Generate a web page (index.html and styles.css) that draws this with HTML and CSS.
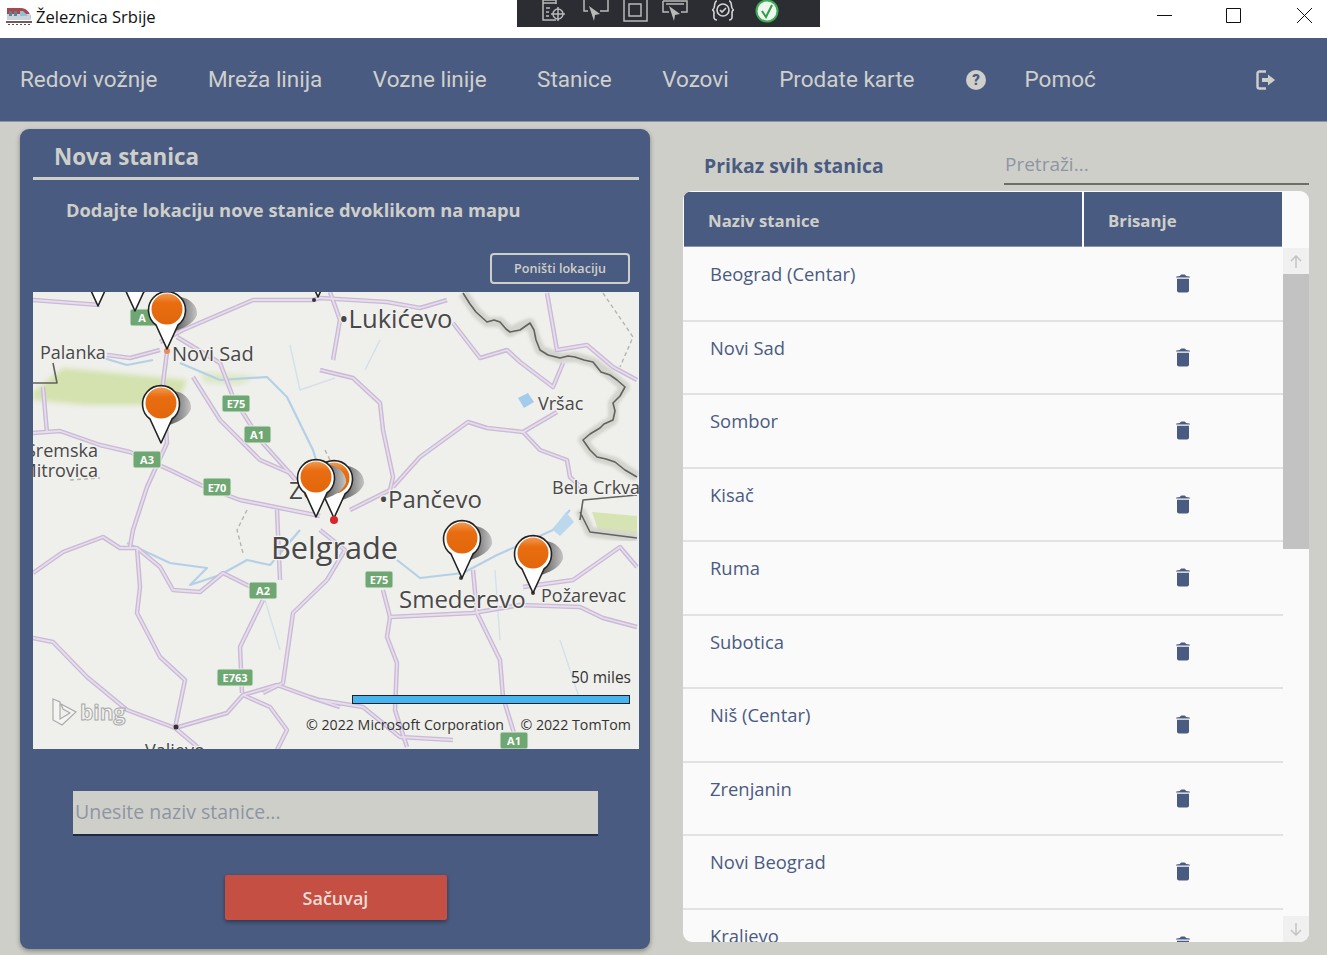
FILE: index.html
```html
<!DOCTYPE html>
<html>
<head>
    <meta charset="utf-8">
    <title>Železnica Srbije</title>
    <link rel="stylesheet" href="styles.css">
</head>
<body>
<!-- naslovna traka -->
<div class="titlebar">
    <div class="app-title">
        <svg class="train" width="26" height="20" viewBox="0 0 26 20">
            <path d="M1 2h14c5 0 9 4 10 10v2H1z" fill="#a8474c"/>
            <path d="M1 8h23l1 4v2H1z" fill="#c9d3dc"/>
            <path d="M3 5h3v5H3zM8 5h3v5H8z" fill="#5f7f96"/>
            <path d="M14 5h3l5 5h-8z" fill="#8fc0d6"/>
            <path d="M0 15h26v2H0z" fill="#6f5b60"/>
            <path d="M2 18h2v1H2zM6 18h2v1H6zM10 18h2v1h-2zM14 18h2v1h-2zM18 18h2v1h-2zM22 18h2v1h-2z" fill="#555"/>
        </svg>
        <span>Železnica Srbije</span>
    </div>
    <div class="debugbar">
        <svg width="28" height="24" viewBox="0 0 28 24" fill="none" stroke="#b9b9b9" stroke-width="1.5">
            <path d="M15 20H2V0h13v4"/><path d="M2 3h13M5 8h4M5 12h3M5 16h3"/>
            <circle cx="17" cy="14" r="5"/><path d="M17 7v14M10 14h14"/>
        </svg>
        <svg width="26" height="24" viewBox="0 0 26 24" fill="none" stroke="#b9b9b9" stroke-width="1.5">
            <path d="M1 0v11h4M25 0v11h-8"/>
            <path d="M6 6l11 8-5 1-1 6z" fill="#b9b9b9" stroke="none"/>
        </svg>
        <svg width="25" height="24" viewBox="0 0 25 24" fill="none" stroke="#b9b9b9" stroke-width="1.5">
            <path d="M1 0v21h23V0M6 4h12v12H6z"/>
        </svg>
        <svg width="26" height="24" viewBox="0 0 26 24" fill="none" stroke="#b9b9b9" stroke-width="1.5">
            <path d="M1 1h24v11h-6M1 1v11h6M4 4h18"/>
            <path d="M7 6l11 8-5 1-1 6z" fill="#b9b9b9" stroke="none"/>
        </svg>
        <svg width="24" height="24" viewBox="0 0 24 24" fill="none" stroke="#d4d4d4" stroke-width="1.6">
            <path d="M6 1C3 1 4 6 3 8S1 10 1 10s2 0 2 3-1 7 3 7M18 1c3 0 2 5 3 7s2 2 2 2-2 0-2 3 1 7-3 7"/>
            <circle cx="12" cy="10" r="6"/><path d="M9 10l2 2 4-4"/>
        </svg>
        <svg width="24" height="24" viewBox="0 0 24 24">
            <circle cx="12" cy="11" r="11.5" fill="#3dac55"/>
            <circle cx="12" cy="11" r="9.5" fill="#eef6ee"/>
            <path d="M7 11l4 6 6-12" fill="none" stroke="#2f9e46" stroke-width="2"/>
        </svg>
    </div>
    <div class="window-btns">
        <svg width="15" height="15" viewBox="0 0 15 15"><path d="M0 7.5h15" stroke="#111"/></svg>
        <svg class="win-max" width="15" height="15" viewBox="0 0 15 15"><path d="M.5.5h14v14H.5z" fill="none" stroke="#111"/></svg>
        <svg width="15" height="15" viewBox="0 0 15 15"><path d="M0 0l15 15M15 0L0 15" stroke="#111"/></svg>
    </div>
</div>

<!-- glavni meni -->
<nav class="nav">
    <a>Redovi vožnje</a>
    <a>Mreža linija</a>
    <a>Vozne linije</a>
    <a>Stanice</a>
    <a>Vozovi</a>
    <a>Prodate karte</a>
    <span class="help-icon">?</span>
    <a class="help-link">Pomoć</a>
    <svg class="logout" width="19" height="20" viewBox="0 0 19 20">
        <path d="M10 1.5H3.5a2 2 0 0 0-2 2v13a2 2 0 0 0 2 2H10" fill="none" stroke="#d0d0cb" stroke-width="2.4"/>
        <path d="M6 8h6V4.5l7 5.5-7 5.500V12H6z" fill="#d0d0cb"/>
    </svg>
</nav>

<div class="main">
    <!-- nova stanica -->
    <section class="panel">
        <h2 class="panel-title">Nova stanica</h2>
        <p class="panel-hint">Dodajte lokaciju nove stanice dvoklikom na mapu</p>
        <div class="reset-row"><button class="btn-outline">Poništi lokaciju</button></div>

        <svg class="map" width="606" height="457" viewBox="33 292 606 457">
            <defs>
                <linearGradient id="pinShadow" x1="0" y1="0" x2="1" y2="0">
                    <stop offset="0" stop-color="#333"/>
                    <stop offset="1" stop-color="#c4c4c4"/>
                </linearGradient>
                <linearGradient id="pinFill" x1="0" y1="0" x2="0" y2="1">
                    <stop offset="0" stop-color="#f09a52"/>
                    <stop offset=".3" stop-color="#e96d10"/>
                    <stop offset="1" stop-color="#e2670c"/>
                </linearGradient>
                <filter id="soft"><feGaussianBlur stdDeviation="2.5"/></filter>
                <filter id="halo"><feGaussianBlur stdDeviation="1.6"/></filter>
                <filter id="fine"><feGaussianBlur stdDeviation=".4"/></filter>
                <g id="pin">
                    <path d="M0 0L8-18C14-20 26-24 30-34 31-44 22-51 13-52L0-30z" fill="url(#pinShadow)"/>
                    <path d="M0 0L-11-24A18.5 18.5 0 1 1 11-24z" fill="#fff" stroke="#222" stroke-width="1.6" stroke-linejoin="round"/>
                    <circle cy="-40" r="15.5" fill="url(#pinFill)"/>
                </g>
                <g id="roads">
                    <path d="M160 342L183 330 253 300 313 300 320 298 387 302 420 308 447 300"/>
                    <path d="M177 337L220 363 233 397 260 440 287 470 312 500"/>
                    <path d="M193 377L220 420 260 460 290 473 312 500"/>
                    <path d="M167 352L163 383 167 443 147 487 133 530 130 547"/>
                    <path d="M33 433L60 431 100 445 130 452 170 470 205 487 240 500 290 510 320 516"/>
                    <path d="M47 433L43 387M107 355L130 358 160 350"/>
                    <path d="M320 370L353 378 380 403 383 430 393 477 390 490 350 510"/>
                    <path d="M393 487L420 457 468 422 487 428 523 432 557 412"/>
                    <path d="M523 432L540 450 567 460 570 477 587 493"/>
                    <path d="M453 323L480 358 507 350 520 362 553 387 563 363"/>
                    <path d="M547 293L557 350 587 345 613 367 637 380"/>
                    <path d="M33 300L100 305M330 292L340 320 333 360"/>
                    <path d="M33 573L63 552 103 537 120 548 137 548 160 567 173 590 200 592 223 573 247 585 263 592"/>
                    <path d="M137 548L140 587 137 613 160 657 185 680 175 728"/>
                    <path d="M33 638L53 642 87 677 127 710 175 728 227 713 243 695 277 685 310 697 340 707"/>
                    <path d="M263 600L240 647 242 693"/>
                    <path d="M243 695L270 707 287 730 277 750"/>
                    <path d="M327 580L293 613 283 683 263 693"/>
                    <path d="M277 510L280 580M320 530L345 550 327 580"/>
                    <path d="M383 590L390 617 473 613 520 605 580 607 603 618 637 627"/>
                    <path d="M473 570L477 613 500 660 503 697 517 743"/>
                    <path d="M390 617L387 637 397 663 395 710 407 747"/>
                    <path d="M523 587L573 580 620 547 637 567"/>
                    <path d="M320 700L363 707 400 737 453 740"/>
                    <path d="M175 728L200 749"/>
                </g>
            </defs>

            <rect x="33" y="292" width="606" height="457" fill="#efefec"/>

            <!-- zelene povrsine -->
            <path d="M33 392L63 368 187 380 176 405 87 405 33 400z" fill="#d3e2ae" filter="url(#soft)"/>
            <path d="M200 372L255 376 240 385 205 383z" fill="#dde8c5" filter="url(#soft)"/>
            <path d="M592 512L637 516V534L598 530z" fill="#d6e4b4"/>

            <!-- reke -->
            <g class="river">
                <path d="M100 357L127 365 153 360M180 363L220 380 267 377 287 397 313 450 325 490"/>
                <path d="M397 560L420 578 463 573 497 555 553 530 570 510"/>
                <path d="M127 543L170 563 207 568 190 585 220 575 247 560 270 565 300 530"/>
            </g>
            <g class="stream">
                <path d="M265 600L280 650M495 570L500 640M560 640L580 700M290 345L300 390 335 378M380 340L365 370"/>
            </g>
            <path d="M518 398L528 393 534 402 524 408z" fill="#a5cbec"/>
            <path d="M553 530L566 512 574 522 560 536z" fill="#bcd8ec"/>

            <!-- granice -->
            <path class="border-halo" filter="url(#halo)" d="M463 293L476 312 487 322 500 322 510 332 520 327 530 323 536 340 540 350 560 358 575 357 593 362 610 375 625 387 613 403 613 420 600 428 583 440 590 450 597 457 615 462 637 477"/>
            <path class="border-halo" filter="url(#halo)" d="M580 510L590 532 637 538"/>
            <path class="border-line" d="M463 293L470 304 476 312 487 322 494 320 500 322 506 329 510 332 520 330 530 323 534 330 536 340 540 350 548 355 560 358 568 356 575 357 584 360 593 362 601 372 610 375 617 380 625 387 620 396 613 403 615 411 613 420 604 424 600 428 590 434 583 440 590 450 597 457 606 459 615 462 625 470 637 477"/>
            <path class="border-line" d="M580 512L590 532 637 538M580 520L583 500 637 495M33 383L57 383 53 363"/>
            <path class="border-dash" d="M603 293L633 337 620 367M247 510L237 530 243 553M325 450L340 480M70 480L100 478"/>

            <g filter="url(#fine)">
                <use href="#roads" class="road-casing"/>
                <use href="#roads" class="road-core"/>
            </g>

            <!-- oznake puteva -->
            <g class="shield">
                <rect x="222" y="395" width="28" height="17" rx="2"/><text x="236" y="408">E75</text>
                <rect x="244" y="426" width="27" height="17" rx="2"/><text x="257" y="439">A1</text>
                <rect x="133" y="451" width="28" height="17" rx="2"/><text x="147" y="464">A3</text>
                <rect x="203" y="478" width="28" height="18" rx="2"/><text x="217" y="492">E70</text>
                <rect x="365" y="571" width="28" height="17" rx="2"/><text x="379" y="584">E75</text>
                <rect x="249" y="582" width="28" height="17" rx="2"/><text x="263" y="595">A2</text>
                <rect x="217" y="669" width="36" height="17" rx="2"/><text x="235" y="682">E763</text>
                <rect x="500" y="732" width="28" height="17" rx="2"/><text x="514" y="745">A1</text>
                <rect x="130" y="309" width="28" height="17" rx="2"/><text x="142" y="322">A</text>
            </g>

            <!-- nazivi mesta -->
            <g class="place">
                <text x="40" y="359" font-size="18">Palanka</text>
                <text x="172" y="361" font-size="20">Novi Sad</text>
                <text x="339" y="328" font-size="25.6">•Lukićevo</text>
                <text x="538" y="410" font-size="18">Vršac</text>
                <text x="98" y="457" font-size="18" text-anchor="end">Sremska</text>
                <text x="98" y="477" font-size="18" text-anchor="end">Mitrovica</text>
                <text x="379" y="508" font-size="24">•Pančevo</text>
                <text x="552" y="494" font-size="18">Bela Crkva</text>
                <text x="289" y="499" font-size="24">Ze</text>
                <text x="271" y="559" font-size="30.7">Belgrade</text>
                <text x="399" y="608" font-size="24">Smederevo</text>
                <text x="541" y="602" font-size="18">Požarevac</text>
                <text x="145" y="757" font-size="18">Valjevo</text>
            </g>
            <circle cx="176" cy="727" r="2.5" fill="#333"/>
            <circle cx="167" cy="351" r="3" fill="#e98a5a"/>
            <circle cx="314" cy="300" r="2" fill="#333"/>
            <circle cx="461" cy="578" r="2" fill="#444"/>
            <circle cx="533" cy="593" r="2" fill="#444"/>

            <!-- pinovi -->
            <use href="#pin" x="98" y="306"/>
            <use href="#pin" x="135" y="311"/>
            <use href="#pin" x="318" y="297"/>
            <use href="#pin" x="167" y="349"/>
            <use href="#pin" x="161" y="443"/>
            <use href="#pin" x="334" y="518"/>
            <use href="#pin" x="316" y="517"/>
            <circle cx="334" cy="520" r="4" fill="#d8262a"/>
            <use href="#pin" x="462" y="578"/>
            <use href="#pin" x="533" y="593"/>

            <!-- bing i razmera -->
            <path d="M53 699L60 702V719L70 713 63 709 61 704 76 712 62 725 53 720z" fill="#f4f4f2" stroke="#aaa" stroke-width="1.2"/>
            <text class="bing" x="80" y="720">bing</text>
            <text class="scale-label" x="631" y="683" text-anchor="end">50 miles</text>
            <rect x="352.5" y="695.5" width="277" height="8" fill="#45b4f0" stroke="#222"/>
            <text class="map-note" x="306" y="730">© 2022 Microsoft Corporation</text>
            <text class="map-note" x="631" y="730" text-anchor="end">© 2022 TomTom</text>
        </svg>

        <input class="name-input" type="text" placeholder="Unesite naziv stanice...">
        <button class="btn-save">Sačuvaj</button>
    </section>

    <!-- prikaz stanica -->
    <section class="stations">
        <div class="stations-head">
            <h3>Prikaz svih stanica</h3>
            <input class="search" type="text" placeholder="Pretraži...">
        </div>
        <div class="card">
            <div class="table">
                <div class="thead">
                    <div class="th th-name">Naziv stanice</div>
                    <div class="th th-del">Brisanje</div>
                </div>
                <div class="row"><span class="row-name">Beograd (Centar)</span><svg class="trash" width="16" height="19" viewBox="0 0 16 19"><use href="#trash-icon"/></svg></div>
                <div class="row"><span class="row-name">Novi Sad</span><svg class="trash" width="16" height="19" viewBox="0 0 16 19"><use href="#trash-icon"/></svg></div>
                <div class="row"><span class="row-name">Sombor</span><svg class="trash" width="16" height="19" viewBox="0 0 16 19"><use href="#trash-icon"/></svg></div>
                <div class="row"><span class="row-name">Kisač</span><svg class="trash" width="16" height="19" viewBox="0 0 16 19"><use href="#trash-icon"/></svg></div>
                <div class="row"><span class="row-name">Ruma</span><svg class="trash" width="16" height="19" viewBox="0 0 16 19"><use href="#trash-icon"/></svg></div>
                <div class="row"><span class="row-name">Subotica</span><svg class="trash" width="16" height="19" viewBox="0 0 16 19"><use href="#trash-icon"/></svg></div>
                <div class="row"><span class="row-name">Niš (Centar)</span><svg class="trash" width="16" height="19" viewBox="0 0 16 19"><use href="#trash-icon"/></svg></div>
                <div class="row"><span class="row-name">Zrenjanin</span><svg class="trash" width="16" height="19" viewBox="0 0 16 19"><use href="#trash-icon"/></svg></div>
                <div class="row"><span class="row-name">Novi Beograd</span><svg class="trash" width="16" height="19" viewBox="0 0 16 19"><use href="#trash-icon"/></svg></div>
                <div class="row"><span class="row-name">Kraljevo</span><svg class="trash" width="16" height="19" viewBox="0 0 16 19"><use href="#trash-icon"/></svg></div>
            </div>
            <div class="scrollbar">
                <div class="sb-btn">
                    <svg width="12" height="13" viewBox="0 0 12 13" fill="none" stroke="#c4c4c4" stroke-width="1.5"><path d="M6 13V1M1 6l5-5 5 5"/></svg>
                </div>
                <div class="sb-thumb"></div>
                <div class="sb-track"></div>
                <div class="sb-btn">
                    <svg width="12" height="13" viewBox="0 0 12 13" fill="none" stroke="#c4c4c4" stroke-width="1.5"><path d="M6 0v12M1 7l5 5 5-5"/></svg>
                </div>
            </div>
        </div>
    </section>
</div>

<svg class="icon-defs" width="0" height="0">
    <symbol id="trash-icon" viewBox="0 0 16 19">
        <path d="M1 3.4C1 2.6 1.6 2.2 5 2 5.4 1 6 .6 8 .6s2.600.4 3 1.400c3.400.2 4 .6 4 1.400z" fill="#4a5b82"/>
        <path d="M2 4.800h12v11.700a2 2 0 0 1-2 2H4a2 2 0 0 1-2-2z" fill="#4a5b82"/>
    </symbol>
</svg>
</body>
</html>
```

FILE: styles.css
```css
* { box-sizing: border-box; }
html, body { height: 100%; }
body { margin: 0; height: 955px; overflow: hidden; background: #cfcfc9; font-family: "Open Sans", "Noto Sans", sans-serif; color: #4a5b82; }

/* naslovna traka */
.titlebar { display: flex; height: 38px; background: #fff; }
.app-title { display: flex; align-items: center; gap: 4px; width: 517px; padding: 0 0 6px 6px; font-size: 16.6px; color: #111; }
.train { flex: none; }
.debugbar { display: flex; align-items: flex-start; width: 303px; height: 27px; padding-left: 24px; gap: 14px; background: #2b2d33; }
.debugbar svg:nth-child(5) { margin-left: 9px; margin-right: 6px; }
.window-btns { display: flex; gap: 55px; margin-left: auto; padding: 8px 15px 0 0; }
.win-max { margin: 0 1px 0 -1px; }

/* meni */
.nav { display: flex; align-items: center; gap: 50.5px; height: 84px; padding: 0 52px 0 20px; background: #4a5b82; border-bottom: 1px solid #8c93a3; font-family: Roboto, sans-serif; font-size: 22.5px; color: #d0d0cb; }
.nav a { margin-top: -2px; }
.help-icon { display: flex; align-items: center; justify-content: center; width: 20px; height: 20px; margin-left: 1px; border-radius: 50%; background: #d0d0cb; color: #4a5b82; font-size: 15px; font-weight: 900; }
.nav .help-link { margin-left: -12px; }
.logout { margin-left: auto; }

.main { display: flex; gap: 33px; padding: 7px 18px 0 20px; }

/* leva strana */
.panel { display: flex; flex-direction: column; width: 630px; height: 820px; padding: 0 11px 0 13px; border-radius: 9px; background: #4a5b82; box-shadow: 0 2px 5px rgba(0,0,0,.35); color: #cfcfc9; }
.panel-title { height: 51px; margin: 0; padding: 9px 0 0 21px; border-bottom: 3px solid #cfcfc9; font-size: 22.4px; font-weight: 700; line-height: 38px; }
.panel-hint { margin: 17px 0 0 33px; font-size: 18.3px; font-weight: 700; line-height: 26px; }
.reset-row { display: flex; justify-content: flex-end; padding-right: 9px; margin-top: 30px; }
.btn-outline { width: 140px; height: 31px; padding: 0; border: 2px solid #cfcfc9; border-radius: 4px; background: transparent; color: #cfcfc9; font: 600 12.6px "Open Sans", sans-serif; }
.map { display: block; margin-top: 8px; overflow: hidden; }
.name-input { width: 525px; height: 45px; margin: 42px 0 0 40px; padding: 0 2px 2px; border: 0; border-bottom: 2px solid #1f2a44; border-radius: 0; background: #cfcfc9; color: #4a5b82; font: 19.5px "Open Sans", sans-serif; outline: none; }
.name-input::placeholder { color: #8d95a5; opacity: 1; }
.btn-save { width: 222px; height: 45px; margin: 39px 0 0 191.5px; border: 0; border-radius: 2px; background: #c44f42; color: #eeddd6; box-shadow: 0 2px 4px rgba(0,0,0,.4); font: 600 18px "Open Sans", sans-serif; }

/* karta */
.river { fill: none; stroke: #b4d0e6; stroke-width: 2.2; stroke-linejoin: round; }
.stream { fill: none; stroke: #d2e1ec; stroke-width: 1.4; stroke-linejoin: round; }
.border-halo { fill: none; stroke: #d4d4ce; stroke-width: 10; stroke-linejoin: round; }
.border-line { fill: none; stroke: #62625e; stroke-width: 1.6; stroke-linejoin: round; }
.border-dash { fill: none; stroke: #b5b5b0; stroke-width: 1.4; stroke-dasharray: 4 3; }
.road-casing { fill: none; stroke: #cab9d7; stroke-width: 4.5; stroke-linejoin: round; }
.road-core { fill: none; stroke: #e6deeb; stroke-width: 1.8; stroke-linejoin: round; }
.shield rect { fill: #6ea772; stroke: #e8efe6; stroke-width: 1; }
.shield text { fill: #fff; font: 700 11px "Open Sans", sans-serif; text-anchor: middle; }
.place text { fill: #484848; font-family: "Open Sans", sans-serif; paint-order: stroke; stroke: #f2f2ef; stroke-width: 2.5px; stroke-linejoin: round; }
.bing { fill: #f2f2f0; stroke: #a9a9a9; stroke-width: 1; font: 700 21px "Open Sans", sans-serif; }
.map-note { fill: #333; font: 14.2px "Open Sans", sans-serif; }
.scale-label { fill: #333; font: 15.5px "Open Sans", sans-serif; }

/* desna strana */
.stations { width: 626px; }
.stations-head { display: flex; align-items: flex-start; justify-content: space-between; height: 62px; padding: 22px 0 0 21px; }
.stations-head h3 { margin: 0; font-size: 19.4px; font-weight: 700; line-height: 30px; }
.search { width: 305px; height: 37px; margin-top: -3px; padding: 0 1px 3px; border: 0; border-bottom: 2px solid #6e6e68; background: transparent; color: #4a5b82; font: 19px "Open Sans", sans-serif; outline: none; }
.search::placeholder { color: #8d95a5; opacity: 1; }

.card { display: flex; height: 751px; overflow: hidden; border-radius: 9px; background: #fafafa; }
.table { width: 600px; height: 100%; overflow: hidden; }
.thead { display: flex; height: 57px; padding: 1px 1px 0; }
.th { height: 55px; padding-left: 24px; background: #4a5b82; border-bottom: 1px solid #8c93a3; color: #cfcfc9; font-size: 16.8px; font-weight: 700; line-height: 58px; }
.th-name { width: 398px; margin-right: 2px; }
.th-del { width: 198px; }
.row { display: flex; align-items: center; height: 73.5px; border-bottom: 2px solid #e2e2e2; font-size: 18.4px; }
.row-name { width: 492px; align-self: flex-start; padding: 11px 0 0 27px; line-height: 30px; }

.scrollbar { display: flex; flex-direction: column; width: 26px; margin-top: 57px; }
.sb-btn { display: flex; align-items: center; justify-content: center; height: 26px; background: #f0f0f0; }
.sb-thumb { height: 275px; background: #c2c2c2; }
.sb-track { height: 367px; }
.icon-defs { position: absolute; }
```
